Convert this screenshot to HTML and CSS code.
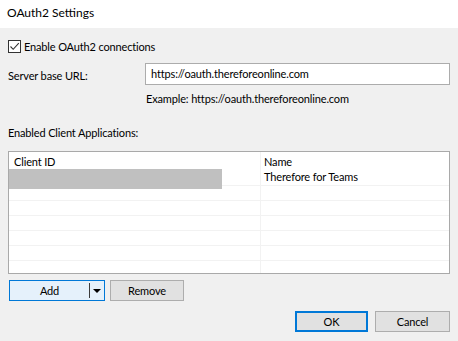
FILE: index.html
```html
<!DOCTYPE html>
<html lang="en">

<head>
    <meta charset="UTF-8">
    <meta name="viewport" content="width=device-width, initial-scale=1.0">
    <title>OAuth2 Settings</title>
    <link rel="stylesheet" href="styles.css">
</head>

<body>
    <div class="titlebar">OAuth2 Settings</div>

    <div class="dialog">
        <label class="check-row">
            <span class="checkbox">
                <svg width="11" height="11" viewBox="0 0 11 11">
                    <path d="M1.5 5.5 L4.2 8.3 L9.8 2.2" fill="none" stroke="#333" stroke-width="1.1"></path>
                </svg>
            </span>
            Enable OAuth2 connections
        </label>

        <div class="url-row">
            <span class="url-label">Server base URL:</span>
            <div class="text-input">https://oauth.thereforeonline.com</div>
        </div>
        <div class="example">Example: https://oauth.thereforeonline.com</div>

        <div class="section-label">Enabled Client Applications:</div>

        <div class="client-table">
            <div class="row header">
                <div class="cell id">Client ID</div>
                <div class="cell name">Name</div>
            </div>
            <div class="row first">
                <div class="cell id"><div class="selected"></div></div>
                <div class="cell name">Therefore for Teams</div>
            </div>
            <div class="row"><div class="cell id"></div><div class="cell name"></div></div>
            <div class="row"><div class="cell id"></div><div class="cell name"></div></div>
            <div class="row"><div class="cell id"></div><div class="cell name"></div></div>
            <div class="row"><div class="cell id"></div><div class="cell name"></div></div>
            <div class="row"><div class="cell id"></div><div class="cell name"></div></div>
            <div class="row last"><div class="cell id"></div><div class="cell name"></div></div>
        </div>

        <div class="table-buttons">
            <div class="btn split">
                <span class="split-label">Add</span>
                <span class="split-arrow"></span>
            </div>
            <div class="btn remove">Remove</div>
        </div>

        <div class="dialog-buttons">
            <div class="btn ok">OK</div>
            <div class="btn cancel">Cancel</div>
        </div>
    </div>
</body>

</html>
```

FILE: styles.css
```css
body {
    margin: 0;
    background-color: #f0f0f0;
    font-family: Lato, "Noto Sans", sans-serif;
    font-size: 11px;
    letter-spacing: -0.15px;
    color: #000;
}

.titlebar {
    height: 28px;
    line-height: 26px;
    padding-left: 7px;
    background-color: #fff;
    font-size: 12px;
    letter-spacing: 0;
}

.dialog {
    padding: 0 8px;
}

.check-row {
    display: flex;
    align-items: center;
    gap: 3px;
    height: 14px;
    margin-top: 11px;
}

.checkbox {
    width: 11px;
    height: 11px;
    border: 1px solid #333;
    background-color: #fff;
    display: flex;
}

.url-row {
    display: grid;
    grid-template-columns: 137px 1fr;
    align-items: center;
    margin-top: 10px;
}

.url-label {
    padding-top: 3px;
}

.text-input {
    height: 20px;
    line-height: 20px;
    border: 1px solid #acacac;
    background-color: #fff;
    padding-left: 5px;
}

.example {
    margin-left: 138px;
    margin-top: 6px;
    line-height: 16px;
}

.section-label {
    margin-top: 18px;
    line-height: 16px;
}

.client-table {
    margin-top: 10px;
    height: 121px;
    border: 1px solid #a9a9a9;
    background-color: #fff;
    overflow: hidden;
}

.row {
    display: flex;
    height: 15px;
    border-bottom: 1px solid #f2f2f2;
    box-sizing: border-box;
}

.row.header {
    height: 17px;
    border-bottom: none;
}

.row.first {
    height: 17px;
}

.row.last {
    border-bottom: none;
}

.cell {
    line-height: 17px;
}

.row.header .cell {
    padding-top: 2px;
    line-height: 15px;
}

.row.first .cell {
    line-height: 15px;
}

.cell.id {
    box-sizing: border-box;
    width: 252px;
    padding-left: 5px;
    border-right: 1px solid #f2f2f2;
}

.cell.name {
    padding-left: 3px;
}

.row.first .cell.id {
    padding-left: 0;
}

.selected {
    width: 213px;
    height: 20px;
    background-color: #c0c0c0;
}

.btn {
    height: 19px;
    line-height: 19px;
    text-align: center;
    border: 1px solid #adadad;
    background-color: #e1e1e1;
}

.table-buttons {
    display: flex;
    gap: 5px;
    margin-top: 6px;
    padding-left: 1px;
}

.split {
    width: 94px;
    display: flex;
    align-items: center;
    border-color: #0078d7;
    background-color: #e5f1fb;
}

.split-label {
    width: 79px;
    border-right: 1px solid #3c3c3c;
    height: 15px;
    line-height: 15px;
}

.split-arrow {
    margin-left: 3px;
    width: 0;
    height: 0;
    border-left: 4px solid transparent;
    border-right: 4px solid transparent;
    border-top: 4px solid #000;
}

.remove {
    width: 72px;
}

.dialog-buttons {
    display: flex;
    justify-content: flex-end;
    gap: 7px;
    margin-top: 10px;
}

.ok {
    width: 69px;
    height: 17px;
    line-height: 17px;
    border: 2px solid #0078d7;
}

.cancel {
    width: 73px;
}
```
